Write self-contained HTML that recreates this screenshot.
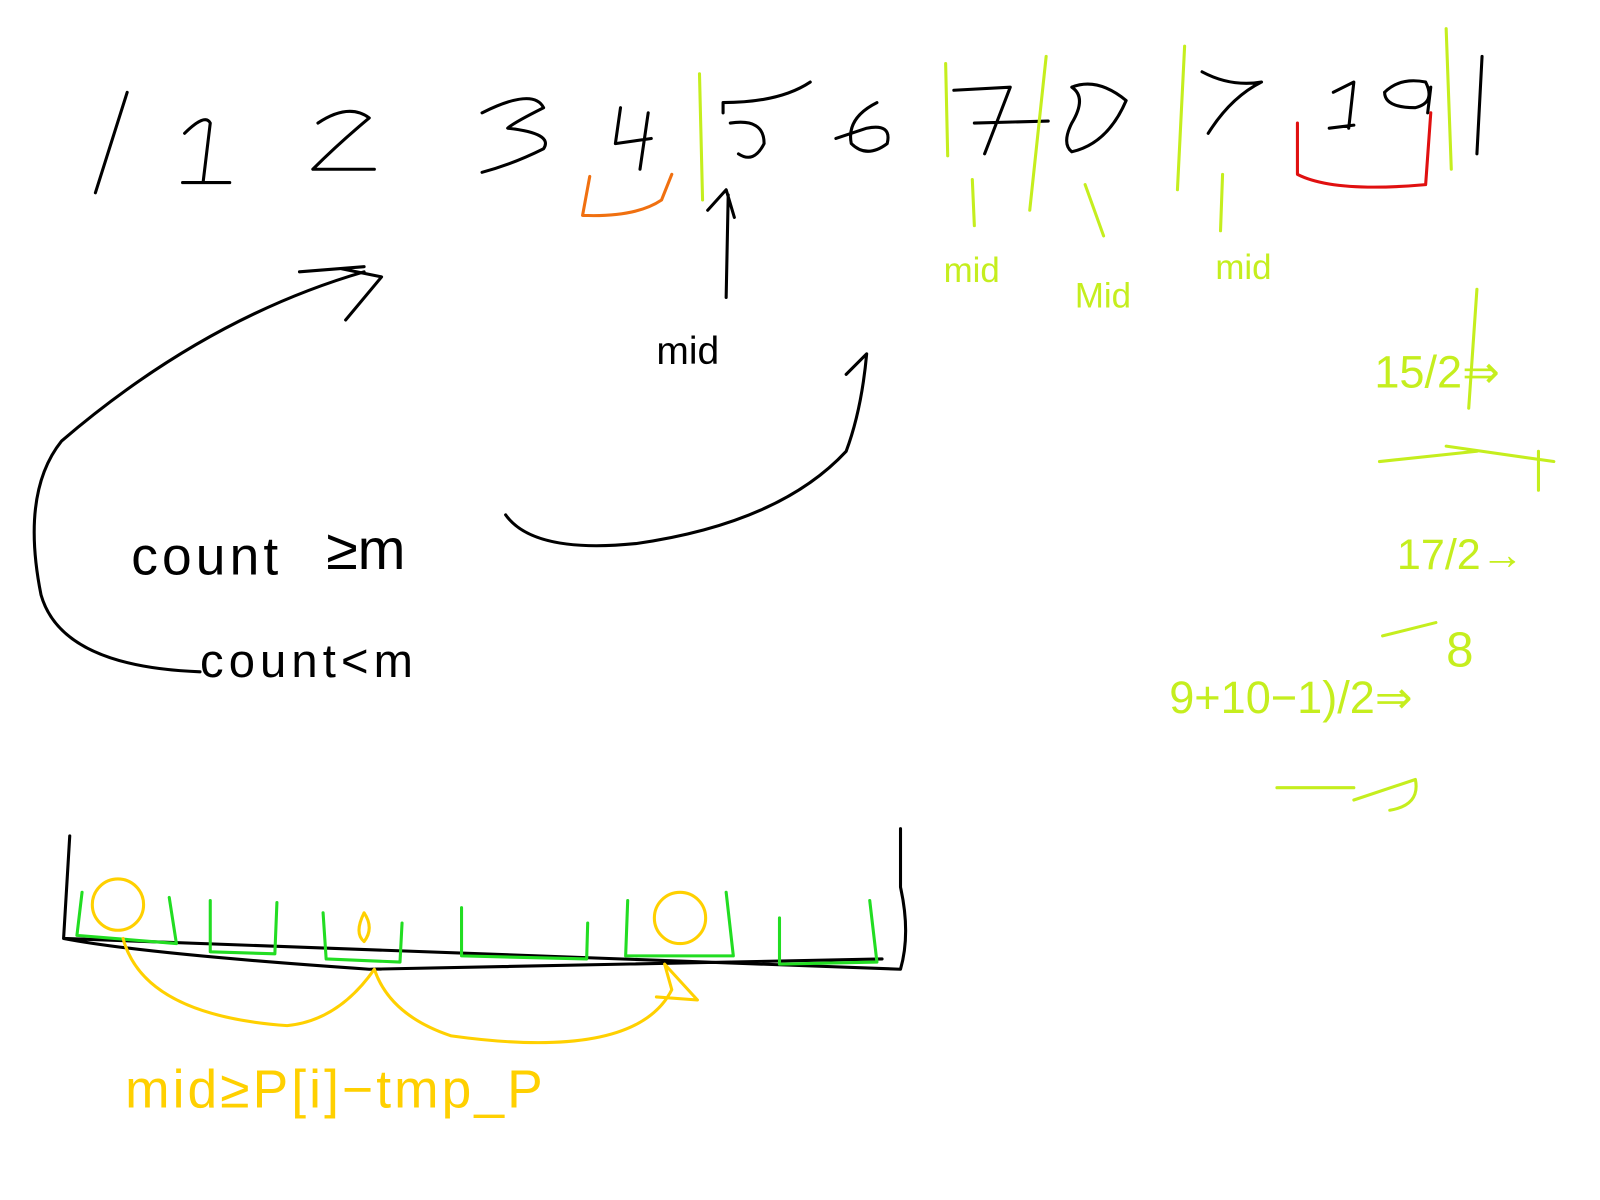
<!DOCTYPE html>
<html><head><meta charset="utf-8"><style>
html,body{margin:0;padding:0;background:#fff;width:1600px;height:1200px;overflow:hidden}
svg{display:block}
text{font-family:"Liberation Sans",sans-serif;font-weight:normal}
</style></head><body>
<svg width="1600" height="1200" viewBox="0 0 1560 1170" fill="none" stroke-linecap="round" stroke-linejoin="round">
<g stroke="#000" stroke-width="3">
<path d="M124 90 L93 188"/>
<path d="M180 130 Q200 110 205 120 L198 178 M178 178 L224 178"/>
<path d="M310 120 Q340 100 360 115 Q330 140 305 165 L365 165"/>
<path d="M470 110 Q520 85 530 105 Q500 120 495 125 Q540 130 530 145 Q500 160 470 168"/>
<path d="M605 105 L600 140 L635 135 M632 110 L624 165"/>
<path d="M705 110 L705 100 Q760 100 790 80 M712 120 Q745 115 745 140 Q735 160 720 150"/>
<path d="M855 100 Q825 115 830 140 Q845 155 865 140 Q870 120 845 125 L815 135"/>
<path d="M930 88 L985 85 L960 150 M950 120 L1022 118"/>
<path d="M1045 85 Q1070 75 1098 98 Q1080 140 1045 148 Q1035 140 1045 120 Q1060 95 1045 85"/>
<path d="M1172 70 Q1200 85 1230 80 Q1200 95 1178 130"/>
<path d="M1300 90 L1320 80 L1315 125 M1296 125 L1320 122"/>
<path d="M1350 90 Q1365 75 1390 80 Q1400 100 1380 105 Q1350 105 1350 90 M1395 85 L1392 110"/>
<path d="M1445 55 L1440 150"/>
<path d="M710 190 L708 290 M690 205 L708 185 L716 212"/>
<path d="M292 265 L355 260 M337 312 L372 270 L333 262"/>
<path d="M355 265 Q200 310 60 430 Q20 480 40 580 Q60 650 195 655"/>
<path d="M493 502 Q520 540 620 530 Q760 510 825 440 Q840 400 845 345 L825 365"/>
<path d="M68 815 L62 915 L878 945 Q888 910 878 865 L878 808 M62 915 Q140 930 360 945 L860 935"/>
</g>
<g fill="#000" font-size="42" stroke="none">
<text x="640" y="355" font-size="38">mid</text>
<text x="128" y="560" font-size="52" letter-spacing="4">count</text>
<text x="318" y="555" font-size="56">≥m</text>
<text x="195" y="660" font-size="46" letter-spacing="5">count&lt;m</text>
</g>
<g stroke="#c5ee1e" stroke-width="3">
<path d="M682 72 L685 195 M922 62 L924 152 M1020 55 L1004 205 M1155 45 L1148 185 M1410 28 L1415 165"/>
<path d="M948 175 L950 220 M1058 180 L1076 230 M1192 170 L1190 225"/>
<path d="M1345 450 L1440 440 M1410 435 L1515 450 M1500 478 L1500 440"/>
<path d="M1348 620 L1400 607 M1440 282 L1432 398 M1245 768 L1320 768 M1320 780 L1380 760 Q1385 785 1355 790"/>
</g>
<g fill="#c5ee1e" stroke="none">
<text x="920" y="275" font-size="34">mid</text>
<text x="1048" y="300" font-size="34">Mid</text>
<text x="1185" y="272" font-size="34">mid</text>
<text x="1340" y="378" font-size="44">15/2⇒</text>
<text x="1362" y="555" font-size="42">17/2→</text>
<text x="1410" y="650" font-size="48">8</text>
<text x="1140" y="695" font-size="44">9+10−1)/2⇒</text>
</g>
<path d="M568 210 L575 172 M568 210 Q620 212 645 195 L655 170" stroke="#f07010" stroke-width="3"/>
<path d="M1265 120 L1265 170 Q1300 188 1390 180 L1395 110" stroke="#e01010" stroke-width="3"/>
<g stroke="#22dd22" stroke-width="3">
<path d="M80 870 L75 912 L172 920 L165 875 M205 878 L205 928 L268 930 L270 880 M315 890 L318 935 L390 938 L392 900 M450 885 L450 932 L572 935 L573 900 M612 878 L610 932 L715 932 L708 870 M760 895 L760 940 L855 938 L848 878"/>
</g>
<g stroke="#ffd000" stroke-width="3">
<circle cx="115" cy="882" r="25"/>
<circle cx="663" cy="895" r="25"/>
<path d="M355 890 Q345 910 355 918 Q365 905 355 890 M120 915 Q140 990 280 1000 Q330 995 365 945 Q380 990 440 1010 Q620 1035 655 965 L648 940 L680 975 L640 972"/>
</g>
<text x="122" y="1080" font-size="52" fill="#ffd000" stroke="none" letter-spacing="3" font-family="Liberation Sans,sans-serif">mid≥P[i]−tmp_P</text>
</svg>
</body></html>
